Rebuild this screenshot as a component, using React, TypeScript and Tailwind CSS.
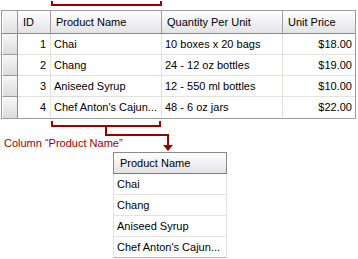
import React from "react";

const cols = [
  { w: "w-[33px]", align: "text-right pr-[4px]" },
  { w: "w-[111px]", align: "text-left pl-[3px]" },
  { w: "w-[121px]", align: "text-left pl-[3px]" },
  { w: "w-[72px]", align: "text-right pr-[3px]" },
];

const rows = [
  ["1", "Chai", "10 boxes x 20 bags", "$18.00"],
  ["2", "Chang", "24 - 12 oz bottles", "$19.00"],
  ["3", "Aniseed Syrup", "12 - 550 ml bottles", "$10.00"],
  ["4", "Chef Anton's Cajun...", "48 - 6 oz jars", "$22.00"],
];

const headers = ["ID", "Product Name", "Quantity Per Unit", "Unit Price"];

export default function App() {
  return (
    <div className="relative w-[358px] h-[259px] overflow-hidden bg-white text-[11px] leading-[13px] text-black font-['Liberation_Sans',Arial,sans-serif]">
      {/* Grid */}
      <div className="mt-[10px] ml-[1px] w-[355px] border border-[#9c9c9c] bg-white">
        <div className="flex h-[23px] border-b border-[#8a8a8a] bg-gradient-to-b from-white to-[#e3e3e7]">
          <div className="w-[16px] border-l border-l-white border-r border-r-[#9a9a9a] bg-gradient-to-b from-[#fafafa] to-[#e0e0e3]" />
          {headers.map((h, i) => (
            <div
              key={h}
              className={`${cols[i].w} flex items-center pl-[5px] whitespace-nowrap ${i < 3 ? "border-r border-[#a0a0a0]" : ""}`}
            >
              {h}
            </div>
          ))}
        </div>
        {rows.map((r, ri) => (
          <div key={ri} className={`flex h-[21px] ${ri < 3 ? "border-b border-[#e4e2da]" : ""}`}>
            <div
              className={`w-[16px] border-l border-l-white border-r border-r-[#8c8c8c] bg-gradient-to-b from-[#f7f7f7] to-[#dcdcdf] ${ri < 3 ? "border-b border-b-[#9a9a9a] -mb-px" : ""}`}
            />
            {r.map((c, ci) => (
              <div
                key={ci}
                className={`${cols[ci].w} ${cols[ci].align} flex items-center ${ci === 0 || ci === 3 ? "justify-end" : ""} whitespace-nowrap overflow-hidden ${ci < 3 ? "border-r border-[#e4e2da]" : ""}`}
              >
                {c}
              </div>
            ))}
          </div>
        ))}
      </div>

      {/* Label */}
      <div className="mt-[18px] ml-[4px] h-[13px] text-[#990000] whitespace-nowrap">
        Column “Product Name”
      </div>

      {/* Small column table */}
      <div className="mt-[2px] ml-[113px] w-[114px]">
        <div className="flex h-[22px] items-center pl-[6px] border border-[#8a8a8a] border-b-[#7a7a7a] bg-gradient-to-b from-white to-[#e3e3e7] whitespace-nowrap">
          Product Name
        </div>
        {rows.map((r, ri) => (
          <div
            key={ri}
            className={`flex h-[21px] items-center pl-[3px] border-x border-b border-[#e4e2da] whitespace-nowrap ${ri === 3 ? "border-b-[#b8b8b8]" : ""}`}
          >
            {r[1]}
          </div>
        ))}
      </div>

      {/* Annotation connectors */}
      <svg className="absolute left-0 top-0 pointer-events-none" width="358" height="259">
        <g fill="#990000">
          {/* top bracket */}
          <rect x="51" y="1" width="2" height="5" />
          <rect x="160" y="1" width="2" height="5" />
          <rect x="51" y="4" width="111" height="2" />
          {/* bottom bracket */}
          <rect x="51" y="121" width="2" height="6" />
          <rect x="159" y="121" width="2" height="6" />
          <rect x="51" y="125" width="110" height="2" />
          <rect x="105" y="125" width="2" height="11" />
          <rect x="105" y="134" width="64" height="2" />
          <rect x="167" y="134" width="2" height="12" />
          <polygon points="163,145 173,145 168,151" />
        </g>
      </svg>
    </div>
  );
}
